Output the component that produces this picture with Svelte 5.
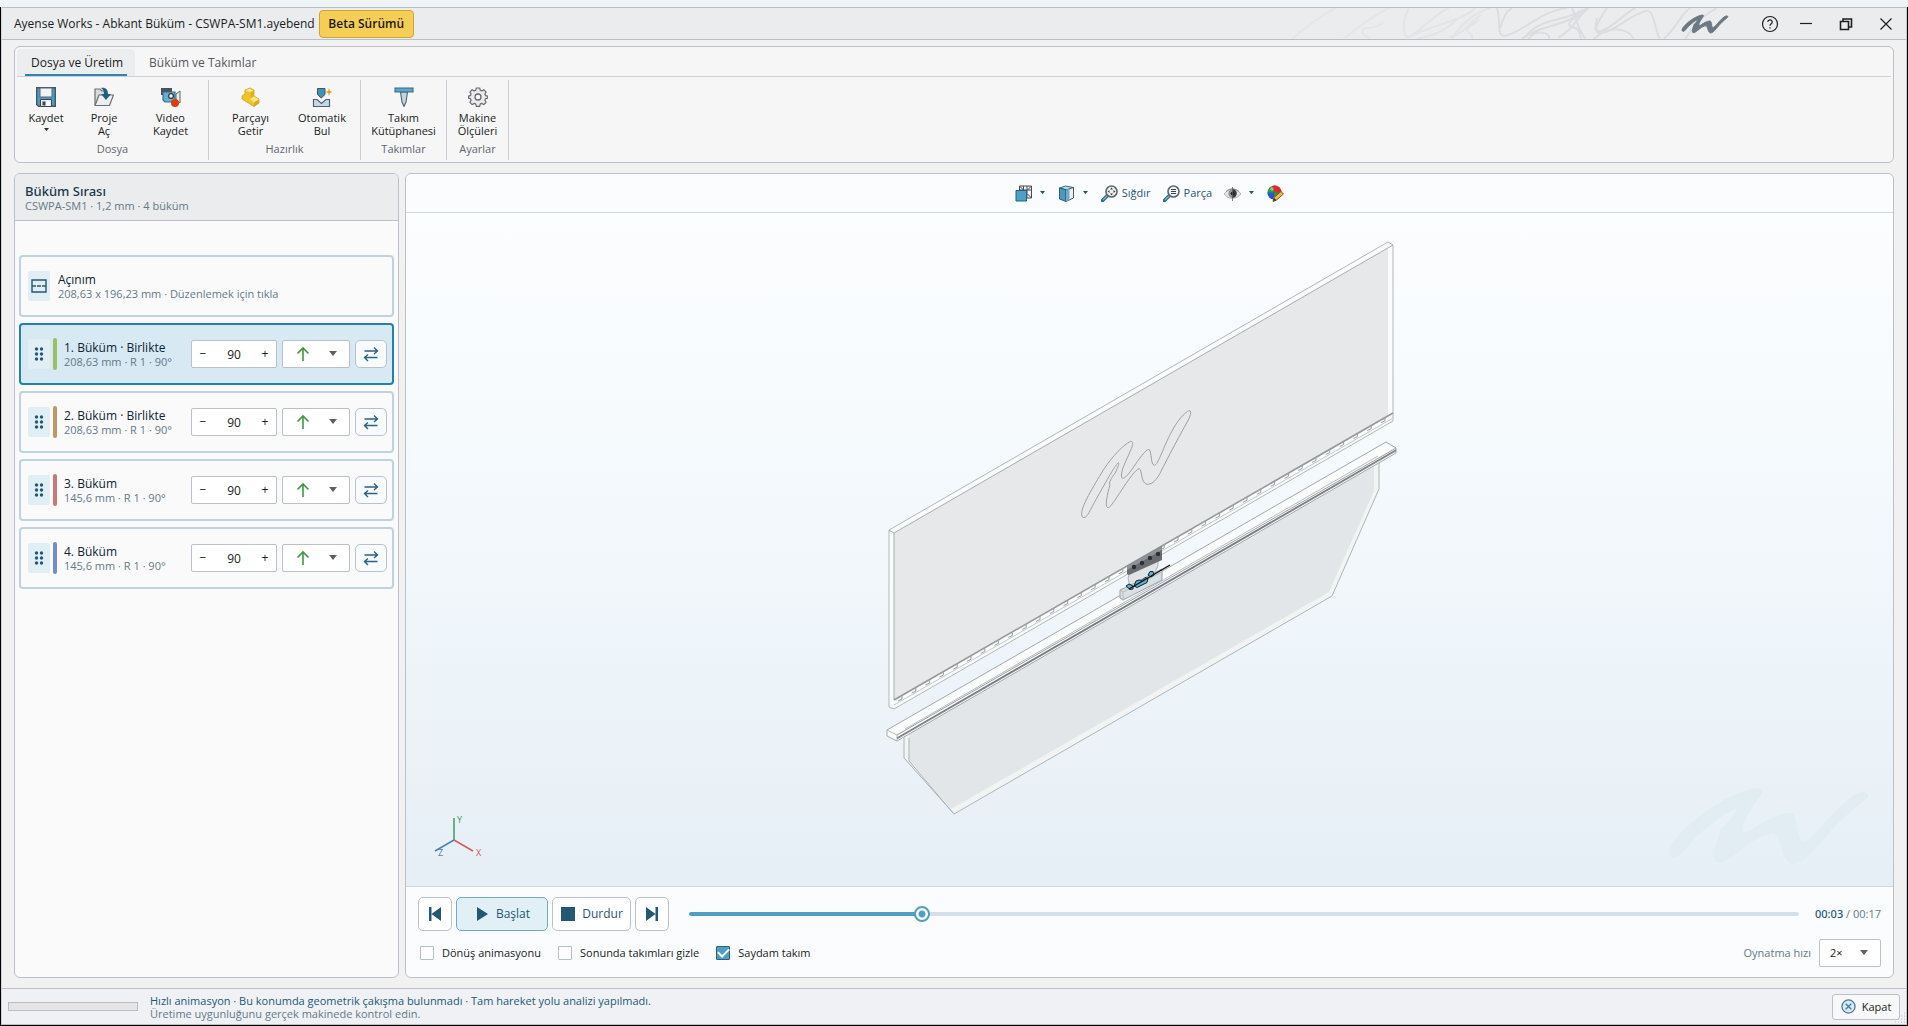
<script lang="ts">
  interface Bend {
    id: number
    title: string
    detail: string
    color: string
    angle: number
  }

  interface Tool {
    icon: string
    lines: string[]
    size: string
    menu?: boolean
  }

  const LOGO = 'M207 275C207 245 270 185 330 145C390 105 450 82 478 83C492 88 490 98 478 110C460 135 425 190 428 212C435 225 450 212 480 192C520 168 560 155 578 160C592 168 592 225 605 243C625 245 650 215 690 170C730 130 760 95 795 94C808 98 810 108 797 118C760 145 700 200 660 250C630 290 600 312 580 312C545 308 545 235 522 221C490 218 440 255 410 280C385 300 365 310 352 308C335 303 340 270 360 220C355 212 362 205 375 195C400 170 412 150 408 145C390 145 330 195 300 220C270 245 245 292 225 292Q208 290 207 275Z'

  const groups: { name: string, tools: Tool[] }[] = [
    {
      name: 'Dosya',
      tools: [
        { icon: 'save', lines: ['Kaydet'], size: 'narrow', menu: true },
        { icon: 'open', lines: ['Proje', 'Aç'], size: 'narrow' },
        { icon: 'video', lines: ['Video', 'Kaydet'], size: 'wide' },
      ],
    },
    {
      name: 'Hazırlık',
      tools: [
        { icon: 'part', lines: ['Parçayı', 'Getir'], size: 'wide' },
        { icon: 'auto', lines: ['Otomatik', 'Bul'], size: 'medium' },
      ],
    },
    { name: 'Takımlar', tools: [{ icon: 'punch', lines: ['Takım', 'Kütüphanesi'], size: 'full' }] },
    { name: 'Ayarlar', tools: [{ icon: 'gear', lines: ['Makine', 'Ölçüleri'], size: 'compact' }] },
  ]

  let bends: Bend[] = $state([
    { id: 1, title: '1. Büküm · Birlikte', detail: '208,63 mm · R 1 · 90°', color: '#9bbf65', angle: 90 },
    { id: 2, title: '2. Büküm · Birlikte', detail: '208,63 mm · R 1 · 90°', color: '#bf9865', angle: 90 },
    { id: 3, title: '3. Büküm', detail: '145,6 mm · R 1 · 90°', color: '#c97878', angle: 90 },
    { id: 4, title: '4. Büküm', detail: '145,6 mm · R 1 · 90°', color: '#738dc9', angle: 90 },
  ])

  let selected = $state(1)
  let activeTab = $state(0)
  let time = $state(3.5)
  const duration = 17
  const played = $derived((time / duration) * 100)

  // Screw positions along the lower edge of the upper beam
  const screws = Array.from({ length: 36 }, (_, i) => ({ x: 902 + i * 13.8, y: 696 - i * 7.95 }))

  function formatTime(value: number): string {
    return `00:${String(Math.floor(value)).padStart(2, '0')}`
  }
</script>

{#snippet caret()}
  <svg class="caret" viewBox="0 0 8 5" aria-hidden="true"><path d="M0 0h8L4 5z" /></svg>
{/snippet}

{#snippet toolIcon(name: string)}
  <svg class="tool-icon" viewBox="0 0 20 20" aria-hidden="true">
    {#if name === 'save'}
      <path d="M.7.7h18.6v18.6H2.500L.7 17.500z" fill="#4a9cc2" stroke="#4a565f" stroke-width="1.4" />
      <path d="M4 1h12v9H4z" fill="#f1f3f4" stroke="#5b6770" />
      <path d="M4.500 12.500h11v7h-11z" fill="#e9ecee" stroke="#3a4650" />
      <path d="M6.500 14.500h3v4h-3z" fill="#3a4650" />
      <path d="M10.500 14.500h3v4h-3z" fill="#fff" />
    {:else if name === 'open'}
      <path d="M1 18V2h5l2 2h4v3" fill="#d8dbde" stroke="#6a7074" stroke-width="1.2" />
      <path d="M1 18.500 5 8h14.500l-4 10.500z" fill="#eceef0" stroke="#6a7074" stroke-width="1.2" stroke-linejoin="round" />
      <path d="M7 1c4-1 7 1 7 6h3l-5 6-5-6h3c0-3-1-5-3-6z" fill="#215f80" />
    {:else if name === 'video'}
      <path d="M0 1h11v4H3v3H0z" fill="#4a5158" />
      <path d="M2 5h12v10H4l-2-2z" fill="#63b1d3" stroke="#2f6f90" stroke-width="1.2" />
      <circle cx="10" cy="9" r="2.4" fill="#f2f5f7" stroke="#3b464e" stroke-width="1.4" />
      <path d="m15 7 4-3v12l-4-3z" fill="#e9ecee" stroke="#5c6368" />
      <circle cx="14" cy="16" r="4" fill="#e23c05" />
    {:else if name === 'part'}
      <path d="m1 9 3-2V3l5-2 4 2v6l5 3v4l-5 3.500L1 12z" fill="#f2c327" stroke="#cfa01a" stroke-width=".8" stroke-linejoin="round" />
      <path d="m4.500 3.500 4-2 4 2-3 1.800z" fill="#fbe78c" />
      <path d="m9.500 5.300 3-1.800v6l-3 2z" fill="#e0b01f" />
      <path d="m9 12 4-2.500 5 3-5 3z" fill="#fbe78c" />
      <path d="m13 15.500 5-3V16l-5 3.500z" fill="#dba91a" />
    {:else if name === 'auto'}
      <path d="M5.500 1.500h7.500v6L9.200 11 5.500 7.500z" fill="#3a93bd" stroke="#4a5158" stroke-width="1" />
      <path d="M1.500 19.500v-7H5l4.500 4 4.500-4h3.500v7z" fill="#c3dbe8" stroke="#546069" stroke-width="1.2" />
      <path d="m17 1 .9 3 2.600 1-2.600 1-.9 3-.9-3-2.600-1 2.600-1z" fill="#e0a11b" />
    {:else if name === 'punch'}
      <path d="M6.500 5h7L12 15l-2 4.500L8 15z" fill="#bfd7e5" stroke="#546069" stroke-width="1.1" />
      <path d="M1 1h18v4H1z" fill="#58a9cf" stroke="#3d6680" stroke-width="1.1" />
    {:else if name === 'gear'}
      <path d="M8.300 1h3.400l.5 2.200 1.600.7 2-1.200 2.300 2.400-1.200 1.900.7 1.600 2.100.6v1.900l-2.100.6-.7 1.600 1.200 2-2.300 2.300-2-1.200-1.600.7-.5 2.200H8.300l-.5-2.200-1.600-.7-2 1.200-2.300-2.300 1.200-2-.7-1.600-2.100-.6V9.200l2.100-.6.7-1.600-1.200-1.900 2.300-2.400 2 1.200 1.600-.7z" fill="#e9ebec" stroke="#65696d" stroke-width="1.2" stroke-linejoin="round" />
      <circle cx="10" cy="10" r="3" fill="#fff" stroke="#65696d" stroke-width="1.3" />
    {/if}
  </svg>
{/snippet}

{#snippet magnifier(kind: string)}
  <svg class="view-icon" viewBox="0 0 17 17" aria-hidden="true">
    <path d="m1.500 15.500 5-5" stroke="#2f6583" stroke-width="3.500" stroke-linecap="round" />
    <path d="m2 15 4-4" stroke="#7ab3d0" stroke-width="1.300" />
    <circle cx="10.500" cy="6.500" r="5.500" fill="#eef2f4" stroke="#5f666b" stroke-width="1.600" />
    {#if kind === 'fit'}
      <path d="m10.500 2.500 1.500 2H9zM10.500 10.500l1.500-2H9zM6.500 6.500l2-1.500v3zM14.500 6.500l-2-1.500v3z" fill="#3d4449" />
    {:else}
      <path d="M8 4.500h5M8 6.500h5M8 8.500h5" stroke="#3d4449" />
    {/if}
  </svg>
{/snippet}

<div class="app">
  <header class="titlebar">
    <h1>Ayense Works - Abkant Büküm - CSWPA-SM1.ayebend</h1>
    <button class="beta">Beta Sürümü</button>
    <svg class="flourish" viewBox="0 0 1200 93" aria-hidden="true">
      <g fill="none" stroke="#e2e4e7" stroke-width="6">
        <path d="M30 93Q90 40 160 0M185 93Q260 30 320 0M305 40C280 70 245 50 240 70C238 85 262 84 264 93" opacity=".7" />
        <path d="M380 0C355 55 368 93 382 88C400 80 470 10 500 0M380 88C450 50 540 40 580 0M405 93C470 80 500 60 530 30" />
        <path d="M510 93C540 40 590 10 625 0M590 35C560 60 552 60 556 70C575 80 568 85 570 93M500 88C550 80 560 40 600 20" />
      </g>
      <g fill="none" stroke="#dbdee1" stroke-width="6">
        <path d="M645 0C660 50 640 85 670 83C720 76 770 10 855 0M720 93C770 50 850 60 915 0M735 80C780 30 850 40 905 5M740 93C760 60 810 75 800 93" />
        <path d="M870 0C885 30 880 50 910 93M655 60C660 40 670 10 690 0M895 20C840 50 865 55 880 60C900 70 890 88 900 93M830 88C880 60 890 20 920 0" />
        <path d="M975 0C940 50 935 75 955 76C1000 72 1040 20 1095 8C1120 10 1120 80 1135 93M945 30C940 60 935 70 955 70C1000 55 1020 20 1060 0M935 93C980 50 1040 60 1055 93M1145 93C1190 50 1195 20 1225 0M1210 93C1240 40 1270 20 1305 0" />
      </g>
    </svg>
    <svg class="logo" viewBox="207 83 601 229" preserveAspectRatio="none" aria-hidden="true"><path d={LOGO} /></svg>
    <nav class="window-buttons">
      <button class="help" aria-label="Yardım">
        <svg viewBox="0 0 18 18"><circle cx="9" cy="9" r="7.500" /><path d="M6.800 7a2.200 2.200 0 1 1 3.300 1.900Q9 9.500 9 10.800M9 12.200v1.400" /></svg>
      </button>
      <button aria-label="Küçült"><svg viewBox="0 0 18 18"><path d="M3 8.500h12" /></svg></button>
      <button aria-label="Geri yükle">
        <svg viewBox="0 0 18 18"><path d="M3.500 6.500h8v8h-8zM6 6V4h8.500v8H12" stroke-width="1.600" /></svg>
      </button>
      <button aria-label="Pencereyi kapat"><svg viewBox="0 0 18 18"><path d="m3.500 3.500 11 11m0-11-11 11" /></svg></button>
    </nav>
  </header>

  <main>
    <section class="ribbon">
      <div class="tabs" role="tablist">
        {#each ['Dosya ve Üretim', 'Büküm ve Takımlar'] as tab, index}
          <button
            class="tab"
            class:active={activeTab === index}
            role="tab"
            aria-selected={activeTab === index}
            onclick={() => (activeTab = index)}
          >
            {tab}
          </button>
        {/each}
      </div>
      <div class="groups">
        {#each groups as group}
          <div class="group">
            <div class="tools">
              {#each group.tools as tool}
                <button class="tool {tool.size}">
                  {@render toolIcon(tool.icon)}
                  {#each tool.lines as line}
                    <span>{line}</span>
                  {/each}
                  {#if tool.menu}
                    {@render caret()}
                  {/if}
                </button>
              {/each}
            </div>
            <div class="group-name">{group.name}</div>
          </div>
        {/each}
      </div>
    </section>

    <div class="workspace">
      <aside class="panel sequence">
        <header>
          <h2>Büküm Sırası</h2>
          <p>CSWPA-SM1 · 1,2 mm · 4 büküm</p>
        </header>
        <div class="cards">
          <div class="card">
            <span class="handle">
              <svg viewBox="0 0 16 16" class="sheet" aria-hidden="true"><path d="M1 2h14v12H1z" /><path d="M1 8h14" stroke-dasharray="4 1" /></svg>
            </span>
            <div class="card-text flat">
              <h3>Açınım</h3>
              <p>208,63 x 196,23 mm · Düzenlemek için tıkla</p>
            </div>
          </div>
          {#each bends as bend (bend.id)}
            <div class="card" class:selected={selected === bend.id}>
              <button class="handle" aria-label="{bend.title} seç" onclick={() => (selected = bend.id)}>
                <svg viewBox="0 0 16 16" class="grip" aria-hidden="true">
                  {#each [3, 8, 13] as cy}
                    <circle cx="5.500" {cy} r="1.700" /><circle cx="10.500" {cy} r="1.700" />
                  {/each}
                </svg>
              </button>
              <span class="stripe" style="background: {bend.color}"></span>
              <div class="card-text">
                <h3>{bend.title}</h3>
                <p>{bend.detail}</p>
              </div>
              <div class="stepper">
                <button aria-label="Azalt" onclick={() => bend.angle--}>−</button>
                <input type="text" aria-label="{bend.title} açısı" bind:value={bend.angle} />
                <button aria-label="Artır" onclick={() => bend.angle++}>+</button>
              </div>
              <div class="select direction">
                <select aria-label="{bend.title} yönü"><option value="up" aria-label="Yukarı"></option></select>
                <svg class="up" viewBox="0 0 14 16" aria-hidden="true"><path d="M7 15V2M1.500 7.500 7 2l5.500 5.500" /></svg>
                {@render caret()}
              </div>
              <button class="swap" aria-label="Ters çevir">
                <svg viewBox="0 0 16 16" aria-hidden="true"><path d="M1.500 5h13M11 1.500 14.500 5 11 8M14.500 11.500h-13M5 8.500l-3.500 3L5 15" /></svg>
              </button>
            </div>
          {/each}
        </div>
      </aside>

      <section class="panel viewer">
        <div class="view-tools">
          <button aria-label="Görünüm yönü">
            <svg class="view-icon" viewBox="0 0 17 17" aria-hidden="true">
              <path d="M4.500 1h12v12h-12zM4.500 1l4 4M16.500 1l-4 4M16.500 13l-4-4M8.500 1v15M12 1v12M4 5h12" fill="#f3f5f6" stroke="#454b50" />
              <path d="M1 5.500h10.500V16H1z" fill="#4f9fc6" stroke="#1f6287" />
            </svg>
            {@render caret()}
          </button>
          <button aria-label="Görüntü biçimi">
            <svg class="view-icon" viewBox="0 0 17 17" aria-hidden="true">
              <path d="m1.500 3 6-2 8 1.500-6 2.500z" fill="#b9dcec" stroke="#3f6479" />
              <path d="M1.500 3 8 5v11.500L1.500 14z" fill="#4b99c0" stroke="#2c5f7c" />
              <path d="m8 5 7.500-2.500V13L8 16.500z" fill="#eef1f3" stroke="#50575c" />
              <path d="m8 5 3.500-1.200v11L8 16.500z" fill="#6badcb" />
            </svg>
            {@render caret()}
          </button>
          <button>{@render magnifier('fit')}Sığdır</button>
          <button>{@render magnifier('part')}Parça</button>
          <button aria-label="Göster veya gizle">
            <svg class="view-icon" viewBox="0 0 17 17" aria-hidden="true">
              <path d="M0 9Q3.500 3.500 8.500 3.500T17 9q-3.500 4.500-8.500 4.500T0 9z" fill="#e3e5e6" stroke="#a5a9ac" stroke-width=".8" />
              <path d="M2 6.500q6.500-5 13 0" stroke="#8b8f92" />
              <circle cx="8.500" cy="8.500" r="4.200" fill="#8d9296" />
              <path d="M8.500 4.300a4.200 4.200 0 0 1 0 8.400z" fill="#35393c" />
              <circle cx="8.500" cy="8.500" r="1.800" fill="#1d1f21" />
              <path d="M8.500 2v14" stroke="#5b6064" stroke-width=".8" />
            </svg>
            {@render caret()}
          </button>
          <button aria-label="Görünüm renkleri">
            <svg class="view-icon" viewBox="0 0 17 17" aria-hidden="true">
              <circle cx="7.500" cy="7.500" r="7" fill="#2c9c3b" />
              <path d="M7.500 7.500 5 1a7 7 0 0 1 9.500 6.500z" fill="#e3262b" />
              <path d="M7.500 7.500H.5a7 7 0 0 0 6 7z" fill="#2456cf" />
              <circle cx="5" cy="4" r="1.800" fill="#fff" opacity=".45" />
              <path d="m6 16.500 1-4 7-6 2.500 2.500-7 6z" fill="#f1b84a" stroke="#74501c" stroke-width=".9" />
              <path d="m6 16.500 1-3.500 2.500 2z" fill="#4d3512" />
            </svg>
          </button>
        </div>

        <div class="canvas">
          <svg class="scene" viewBox="406 213 1487 673" aria-hidden="true">
            <!-- upper beam -->
            <path d="M889 530 1388 242 1393 245V421L894 709 889 707Z" fill="#fafbfb" />
            <path d="M894 533 1388 248V416L894 700Z" fill="#e6e8e9" />
            <g fill="none" stroke="#a9adb0">
              <path d="M889 530 1388 242 1393 245V421L894 709 889 707Z" stroke="#b3b7b9" />
              <path d="M889 530l5 3V700M894 533 1393 245" />
              <path d="M894 705 1393 418" stroke="#c4c8ca" />
              <path d="M894 700 1393 413" stroke="#94989b" stroke-width="1.600" />
            </g>
            {#each screws as s}
              <path d="M{s.x} {s.y}v3l-4 2" fill="none" stroke="#9a9ea1" />
            {/each}

            <!-- lower plate -->
            <path d="M904 731V758L909 761 954 814 1332 596 1379 489V458Z" fill="#f2f4f4" />
            <path d="M909 731V761L951 809 1329 592 1374 491V462Z" fill="#e3e6e8" />
            <path d="M904 736V758L954 814 1332 596 1379 489V462M909 738V761L954 814" fill="none" stroke="#b0b4b7" />

            <!-- lower beam -->
            <path d="M887 730 1386 442 1396 448V453L897 741 887 736Z" fill="#fbfcfc" stroke="#a4a8ab" />
            <path d="M887 730l10 5v6M905 729 1378 456" fill="none" stroke="#b7bbbd" />
            <path d="M897 735 1396 448M897 739 1396 451" fill="none" stroke="#9a9ea1" />
            <path d="M897 738 1396 450" fill="none" stroke="#74787b" stroke-width="1.400" />

            <path
              class="engraving"
              transform="translate(1060 390) scale(.3333)"
              d="M65 375C62 350 100 290 130 240C160 195 190 165 212 154C222 153 218 170 210 185C200 210 180 245 185 262C190 272 205 255 225 225C245 195 262 175 268 179C275 185 272 225 283 226C295 225 310 170 335 125C350 95 375 65 388 62C396 62 392 75 385 90C365 125 325 200 300 250C285 280 265 288 255 280C243 270 246 240 238 236C228 236 205 270 185 300C165 330 150 355 143 353C134 350 142 310 150 285C145 280 155 262 165 250C175 230 178 220 175 218C165 225 130 290 110 325C90 360 82 383 72 383Q66 383 65 375Z"
            />

            <!-- punch, die and workpiece -->
            <path d="M1130 572 1158 557V566L1154 574 1130 587 1128 578Z" fill="#dfe3e5" stroke="#aeb3b6" />
            <path d="M1127 566 1162 546V560L1129 575 1127 574Z" fill="#686c70" />
            <path d="M1127 566 1162 546v4l-35 20Z" fill="#8f9396" />
            <g fill="#2c3034">
              <circle cx="1134" cy="567" r="2.200" />
              <circle cx="1142" cy="563" r="2.200" />
              <circle cx="1150" cy="558" r="2.200" />
              <circle cx="1158" cy="554" r="2.200" />
            </g>
            <path d="M1120 590 1127 587 1162 569V580L1123 600 1120 598Z" fill="#d8e0e3" stroke="#9aa1a4" />
            <path d="M1120 590l3 2v8M1123 592 1162 572" fill="none" stroke="#b4babd" />
            <g fill="#5eb0d2" stroke="#15232b">
              <path d="M1126 586l3-2 4 2v3l-3 .5zM1134 586l2-5 3-1 3 .5 3-3 3 1-1 4-6 3-4 2zM1148 575l2-3.500 3 0 1 3.500-3 2z" />
            </g>
            <path d="M1129 589 1170 565" stroke="#0c0e0f" stroke-width="1.300" />
          </svg>

          <svg class="axes" viewBox="0 0 50 46" aria-hidden="true">
            <path d="M20 24V2" stroke="#439a60" />
            <path d="m20 24 19 11" stroke="#d15c5c" />
            <path d="M20 24 1 35" stroke="#4b7fbd" />
            <text x="23" y="7" fill="#439a60">Y</text>
            <text x="42" y="40" fill="#d15c5c">X</text>
            <text x="4" y="40" fill="#4b7fbd">Z</text>
          </svg>
          <svg class="watermark" viewBox="207 83 601 229" aria-hidden="true"><path d={LOGO} /></svg>
        </div>

        <div class="playback">
          <div class="transport">
            <button class="skip" aria-label="Başa dön">
              <svg viewBox="0 0 16 16" aria-hidden="true"><path d="M2 1h2.500v14H2zM14 1v14L4.500 8z" /></svg>
            </button>
            <button class="play">
              <svg viewBox="0 0 16 16" aria-hidden="true"><path d="M3 1v14l11-7z" /></svg>Başlat
            </button>
            <button class="stop">
              <svg viewBox="0 0 16 16" aria-hidden="true"><path d="M1 1h14v14H1z" /></svg>Durdur
            </button>
            <button class="skip" aria-label="Sona git">
              <svg viewBox="0 0 16 16" aria-hidden="true"><path d="M11.500 1H14v14h-2.500zM2 1v14l9.500-7z" /></svg>
            </button>
            <input
              class="timeline"
              type="range"
              aria-label="Zaman çizelgesi"
              min="0"
              max={duration}
              step="0.1"
              bind:value={time}
              style="--played: {played}%"
            />
            <span class="clock"><b>{formatTime(time)}</b> / {formatTime(duration)}</span>
          </div>
          <div class="options">
            <label class="check"><input type="checkbox" /><span>Dönüş animasyonu</span></label>
            <label class="check"><input type="checkbox" /><span>Sonunda takımları gizle</span></label>
            <label class="check"><input type="checkbox" checked /><span>Saydam takım</span></label>
            <label class="speed-label" for="speed">Oynatma hızı</label>
            <div class="select speed">
              <select id="speed"><option>2×</option></select>
              {@render caret()}
            </div>
          </div>
        </div>
      </section>
    </div>
  </main>

  <footer class="statusbar">
    <progress value="0" max="100" aria-label="İlerleme"></progress>
    <div class="status-text">
      <p>Hızlı animasyon · Bu konumda geometrik çakışma bulunmadı · Tam hareket yolu analizi yapılmadı.</p>
      <p class="hint">Üretime uygunluğunu gerçek makinede kontrol edin.</p>
    </div>
    <button class="close">
      <svg viewBox="0 0 16 16" aria-hidden="true"><circle cx="8" cy="8" r="7" /><path d="m5 5 6 6m0-6-6 6" /></svg>Kapat
    </button>
    <svg class="size-grip" viewBox="0 0 12 12" aria-hidden="true">
      <path d="M10 1h1M7 4h1M10 4h1M4 7h1M7 7h1M10 7h1M1 10h1M4 10h1M7 10h1M10 10h1" />
    </svg>
  </footer>
</div>

<style>
  :global(body) {
    margin: 0;
  }

  .app {
    --line: #bcc1c9;
    --ink: #181d21;
    --blue: #235874;
    --muted: #647a88;
    box-sizing: border-box;
    display: flex;
    flex-direction: column;
    height: 100vh;
    border-top: 7px solid #eff4f7;
    border-bottom: 1px solid #000;
    background: #f1f1f2;
    box-shadow: inset 1px 0 #000, inset -1px 0 #000, inset 2px 0 #d3d6d9, inset -2px 0 #c4c9ce;
    padding: 0 2px;
    color: var(--ink);
    font-family: 'Open Sans', 'Noto Sans', sans-serif;
    font-size: 12px;
    line-height: 16px;
  }

  .app :global(*) {
    box-sizing: border-box;
  }

  button,
  input,
  select {
    margin: 0;
    padding: 0;
    border: 0;
    background: none;
    color: inherit;
    font: inherit;
  }

  svg {
    display: block;
    flex: none;
  }

  h1,
  h2,
  h3,
  p {
    margin: 0;
    font-size: inherit;
    font-weight: 400;
  }

  .titlebar {
    display: flex;
    align-items: center;
    height: 33px;
    padding-left: 12px;
    overflow: hidden;
    border: solid #b8bfc5;
    border-width: 1px 0;
    background: #ebecee;
  }

  .beta {
    width: 95px;
    height: 28px;
    margin-left: 4px;
    border: 1px solid #cda534;
    border-radius: 4px;
    background: #f5ce55;
    color: #1c1a12;
    font-weight: 600;
  }

  .flourish {
    width: 400px;
    height: 31px;
    margin-left: auto;
    overflow: visible;
  }

  .logo {
    width: 46px;
    height: 18px;
    margin-right: 26px;
    fill: #6a7983;
    stroke: #6a7983;
    stroke-width: 12px;
    overflow: visible;
  }

  .window-buttons {
    display: flex;
  }

  .window-buttons button {
    display: grid;
    place-items: center;
    width: 40px;
    height: 31px;
  }

  .window-buttons .help {
    width: 32px;
  }

  .window-buttons svg {
    width: 18px;
    height: 18px;
    fill: none;
    stroke: #1d2023;
    stroke-width: 1.2;
  }

  main {
    display: flex;
    flex: 1;
    flex-direction: column;
    gap: 10px;
    min-height: 0;
    padding: 6px 12px 10px;
  }

  .ribbon,
  .panel {
    border: 1px solid var(--line);
    border-radius: 6px;
  }

  .ribbon {
    padding: 2px;
    background: #f6f6f6;
  }

  .tabs {
    display: flex;
    height: 28px;
    border-bottom: 1px solid #cdd1d6;
  }

  .tab {
    position: relative;
    padding: 0 12px 0 14px;
    border-radius: 4px 4px 0 0;
    color: #55595f;
  }

  .tab.active {
    background: #ecedef;
    color: var(--ink);
  }

  .tab.active::after {
    position: absolute;
    right: 8px;
    bottom: 0;
    left: 8px;
    height: 2px;
    background: #2d86b1;
    content: '';
  }

  .groups {
    display: flex;
    padding-top: 3px;
  }

  .group {
    display: flex;
    flex-direction: column;
    justify-content: space-between;
    height: 80px;
    border-right: 1px solid #cacdd1;
  }

  .group:nth-child(2) {
    padding: 0 4px;
  }

  .tools {
    display: flex;
    align-items: flex-start;
  }

  .tool {
    display: flex;
    flex-direction: column;
    align-items: center;
    padding-top: 7px;
    font-size: 11px;
    line-height: 13px;
    white-space: nowrap;
  }

  .tool-icon {
    width: 20px;
    height: 20px;
    margin-bottom: 4px;
  }

  .tool .caret {
    width: 5px;
    margin-top: 4px;
    fill: #2c3136;
  }

  .narrow {
    width: 58px;
  }

  .compact {
    width: 61px;
  }

  .medium {
    width: 68px;
  }

  .wide {
    width: 75px;
  }

  .full {
    width: 85px;
  }

  .group-name {
    padding-bottom: 4px;
    color: #62676d;
    font-size: 11px;
    line-height: 14px;
    text-align: center;
  }

  .workspace {
    display: flex;
    flex: 1;
    gap: 6px;
    min-height: 0;
  }

  .sequence {
    flex: none;
    width: 385px;
    overflow: hidden;
    background: #fafafa;
  }

  .sequence header {
    height: 47px;
    padding: 9px 10px 0;
    border-bottom: 1px solid var(--line);
    background: #ebecee;
  }

  .sequence h2 {
    color: #1b3a4c;
    font-family: 'Noto Sans', sans-serif;
    font-size: 13px;
    font-weight: 500;
    line-height: 16px;
  }

  .sequence p {
    color: var(--muted);
    font-size: 11px;
    line-height: 14px;
  }

  .cards {
    display: flex;
    flex-direction: column;
    gap: 6px;
    padding: 34px 4px 0;
  }

  .card {
    display: flex;
    align-items: center;
    height: 62px;
    padding: 0 5px 0 7px;
    border: 2px solid #bdd4df;
    border-radius: 4px;
  }

  .card.selected {
    border-color: #2382ad;
    background: #d7e9f3;
  }

  .handle {
    display: grid;
    place-items: center;
    width: 22px;
    height: 30px;
    border-radius: 2px;
    background: #e1eef4;
  }

  .handle svg {
    width: 16px;
    height: 16px;
  }

  .grip {
    fill: var(--blue);
  }

  .sheet {
    fill: none;
    stroke: var(--blue);
    stroke-width: 1.4;
  }

  .stripe {
    width: 4px;
    height: 32px;
    margin: 0 7px 0 3px;
    border-radius: 2px;
  }

  .card-text {
    flex: 1;
    padding-top: 2px;
    white-space: nowrap;
  }

  .card-text.flat {
    margin-left: 8px;
  }

  .card h3 {
    color: #0d2533;
    line-height: 14px;
  }

  .stepper {
    display: flex;
    width: 86px;
    height: 28px;
    border: 1px solid var(--line);
    border-radius: 2px;
    background: #fff;
  }

  .stepper button {
    width: 22px;
  }

  .stepper input {
    flex: 1;
    width: 0;
    padding-top: 1px;
    text-align: center;
  }

  .select {
    position: relative;
    height: 28px;
    border: 1px solid var(--line);
    border-radius: 2px;
    background: #fff;
  }

  .select select {
    width: 100%;
    height: 100%;
    appearance: none;
  }

  .select .caret {
    position: absolute;
    top: 10px;
    right: 12px;
    width: 8px;
    fill: #5d6065;
    pointer-events: none;
  }

  .direction {
    width: 68px;
    margin: 0 5px;
  }

  .up {
    position: absolute;
    top: 5px;
    left: 13px;
    width: 14px;
    height: 16px;
    fill: none;
    stroke: #3f9a43;
    stroke-width: 1.6;
    pointer-events: none;
  }

  .swap {
    display: grid;
    place-items: center;
    width: 32px;
    height: 28px;
    border: 1px solid var(--line);
    border-radius: 5px;
    background: #f8fbfe;
  }

  .swap svg {
    width: 16px;
    height: 16px;
    fill: none;
    stroke: #2b6280;
    stroke-width: 1.4;
  }

  .viewer {
    display: flex;
    flex: 1;
    flex-direction: column;
    min-width: 0;
    overflow: hidden;
    background: #fbfcfe;
  }

  .view-tools {
    display: flex;
    align-items: center;
    justify-content: center;
    gap: 12px;
    height: 39px;
    border-bottom: 1px solid #cbd9e3;
    color: var(--blue);
    font-size: 11px;
  }

  .view-tools button {
    display: flex;
    align-items: center;
    gap: 4px;
  }

  .view-icon {
    width: 17px;
    height: 17px;
    fill: none;
  }

  .view-tools .caret {
    width: 5px;
    margin: 0 1px 0 4px;
    fill: var(--blue);
  }

  .canvas {
    position: relative;
    flex: 1;
    min-height: 0;
    border-bottom: 1px solid #cbd9e3;
    background: linear-gradient(#fcfdff, #f5fafd 35%, #edf4f9 70%, #e6eff6);
  }

  .scene {
    width: 100%;
    height: 100%;
  }

  .engraving {
    fill: none;
    stroke: #9da1a4;
    stroke-width: 3;
  }

  .axes {
    position: absolute;
    bottom: 24px;
    left: 28px;
    width: 50px;
    height: 46px;
    overflow: visible;
    font-size: 9px;
    stroke-width: 1.5;
  }

  .axes text {
    stroke: none;
  }

  .watermark {
    position: absolute;
    right: 24px;
    bottom: 22px;
    width: 200px;
    fill: #e2ecf3;
  }

  .playback {
    display: flex;
    flex-direction: column;
    gap: 8px;
    padding: 10px 12px 10px;
  }

  .transport,
  .options {
    display: flex;
    align-items: center;
  }

  .transport {
    gap: 4px;
    color: var(--blue);
    font-size: 12px;
  }

  .transport button {
    display: flex;
    align-items: center;
    justify-content: center;
    gap: 6px;
    width: 34px;
    height: 34px;
    border: 1px solid var(--line);
    border-radius: 5px;
    background: #fff;
  }

  .transport .play {
    width: 92px;
    border-color: #70abc6;
    background: #e1f0f7;
  }

  .transport .stop {
    width: 79px;
  }

  .transport svg {
    width: 16px;
    height: 16px;
    fill: var(--blue);
  }

  .timeline {
    flex: 1;
    height: 20px;
    margin: 0 12px 0 16px;
    appearance: none;
  }

  .timeline::-webkit-slider-runnable-track {
    height: 4px;
    border-radius: 2px;
    background: linear-gradient(90deg, #4f9fc4 var(--played), #d3e0e8 var(--played));
  }

  .timeline::-webkit-slider-thumb {
    width: 16px;
    height: 16px;
    margin-top: -6px;
    border: 2px solid #4f9fc4;
    border-radius: 50%;
    background: radial-gradient(circle, #4f9fc4 3px, #fff 4px);
    appearance: none;
  }

  .clock {
    color: var(--muted);
    font-size: 11px;
  }

  .clock b {
    color: var(--blue);
    font-family: 'Noto Sans', sans-serif;
    font-weight: 500;
  }

  .options {
    font-size: 11px;
  }

  .check {
    display: flex;
    align-items: center;
    gap: 8px;
    margin-right: 17px;
  }

  .check:first-child {
    margin-left: 2px;
  }

  .check input {
    width: 14px;
    height: 14px;
    border: 1px solid #b9bfc8;
    border-radius: 1px;
    background: #fff;
    appearance: none;
  }

  .check input:checked {
    display: grid;
    place-items: center;
    border-color: #28627f;
    background: #4f9fc4;
  }

  .check input:checked::after {
    width: 9px;
    height: 5px;
    margin-bottom: 3px;
    border: solid #fff;
    border-width: 0 0 2px 2px;
    transform: rotate(-45deg);
    content: '';
  }

  .speed-label {
    margin: 0 8px 0 auto;
    color: var(--muted);
  }

  .speed {
    width: 62px;
  }

  .speed select {
    padding-left: 10px;
  }

  .statusbar {
    position: relative;
    display: flex;
    align-items: center;
    height: 37px;
    padding: 0 6px;
    border: solid var(--line);
    border-width: 1px 0;
    background: #f0f1f4;
    font-size: 11px;
  }

  progress {
    width: 130px;
    height: 9px;
    margin-right: 12px;
    border: 1px solid #bdbdbf;
    background: #e5e5e6;
    appearance: none;
  }

  progress::-webkit-progress-bar {
    background: #e5e5e6;
  }

  .status-text {
    flex: 1;
    color: var(--blue);
    line-height: 13px;
  }

  .status-text .hint {
    color: var(--muted);
  }

  .close {
    display: flex;
    align-items: center;
    justify-content: center;
    gap: 6px;
    width: 68px;
    height: 26px;
    border: 1px solid var(--line);
    border-radius: 3px;
    background: #f8f8f9;
  }

  .close svg {
    width: 15px;
    height: 15px;
    fill: #d7e9f1;
    stroke: #4a7c95;
    stroke-width: 1.4;
  }

  .size-grip {
    position: absolute;
    right: 0;
    bottom: 0;
    width: 12px;
    height: 12px;
    stroke: #b3bcc6;
  }
</style>
